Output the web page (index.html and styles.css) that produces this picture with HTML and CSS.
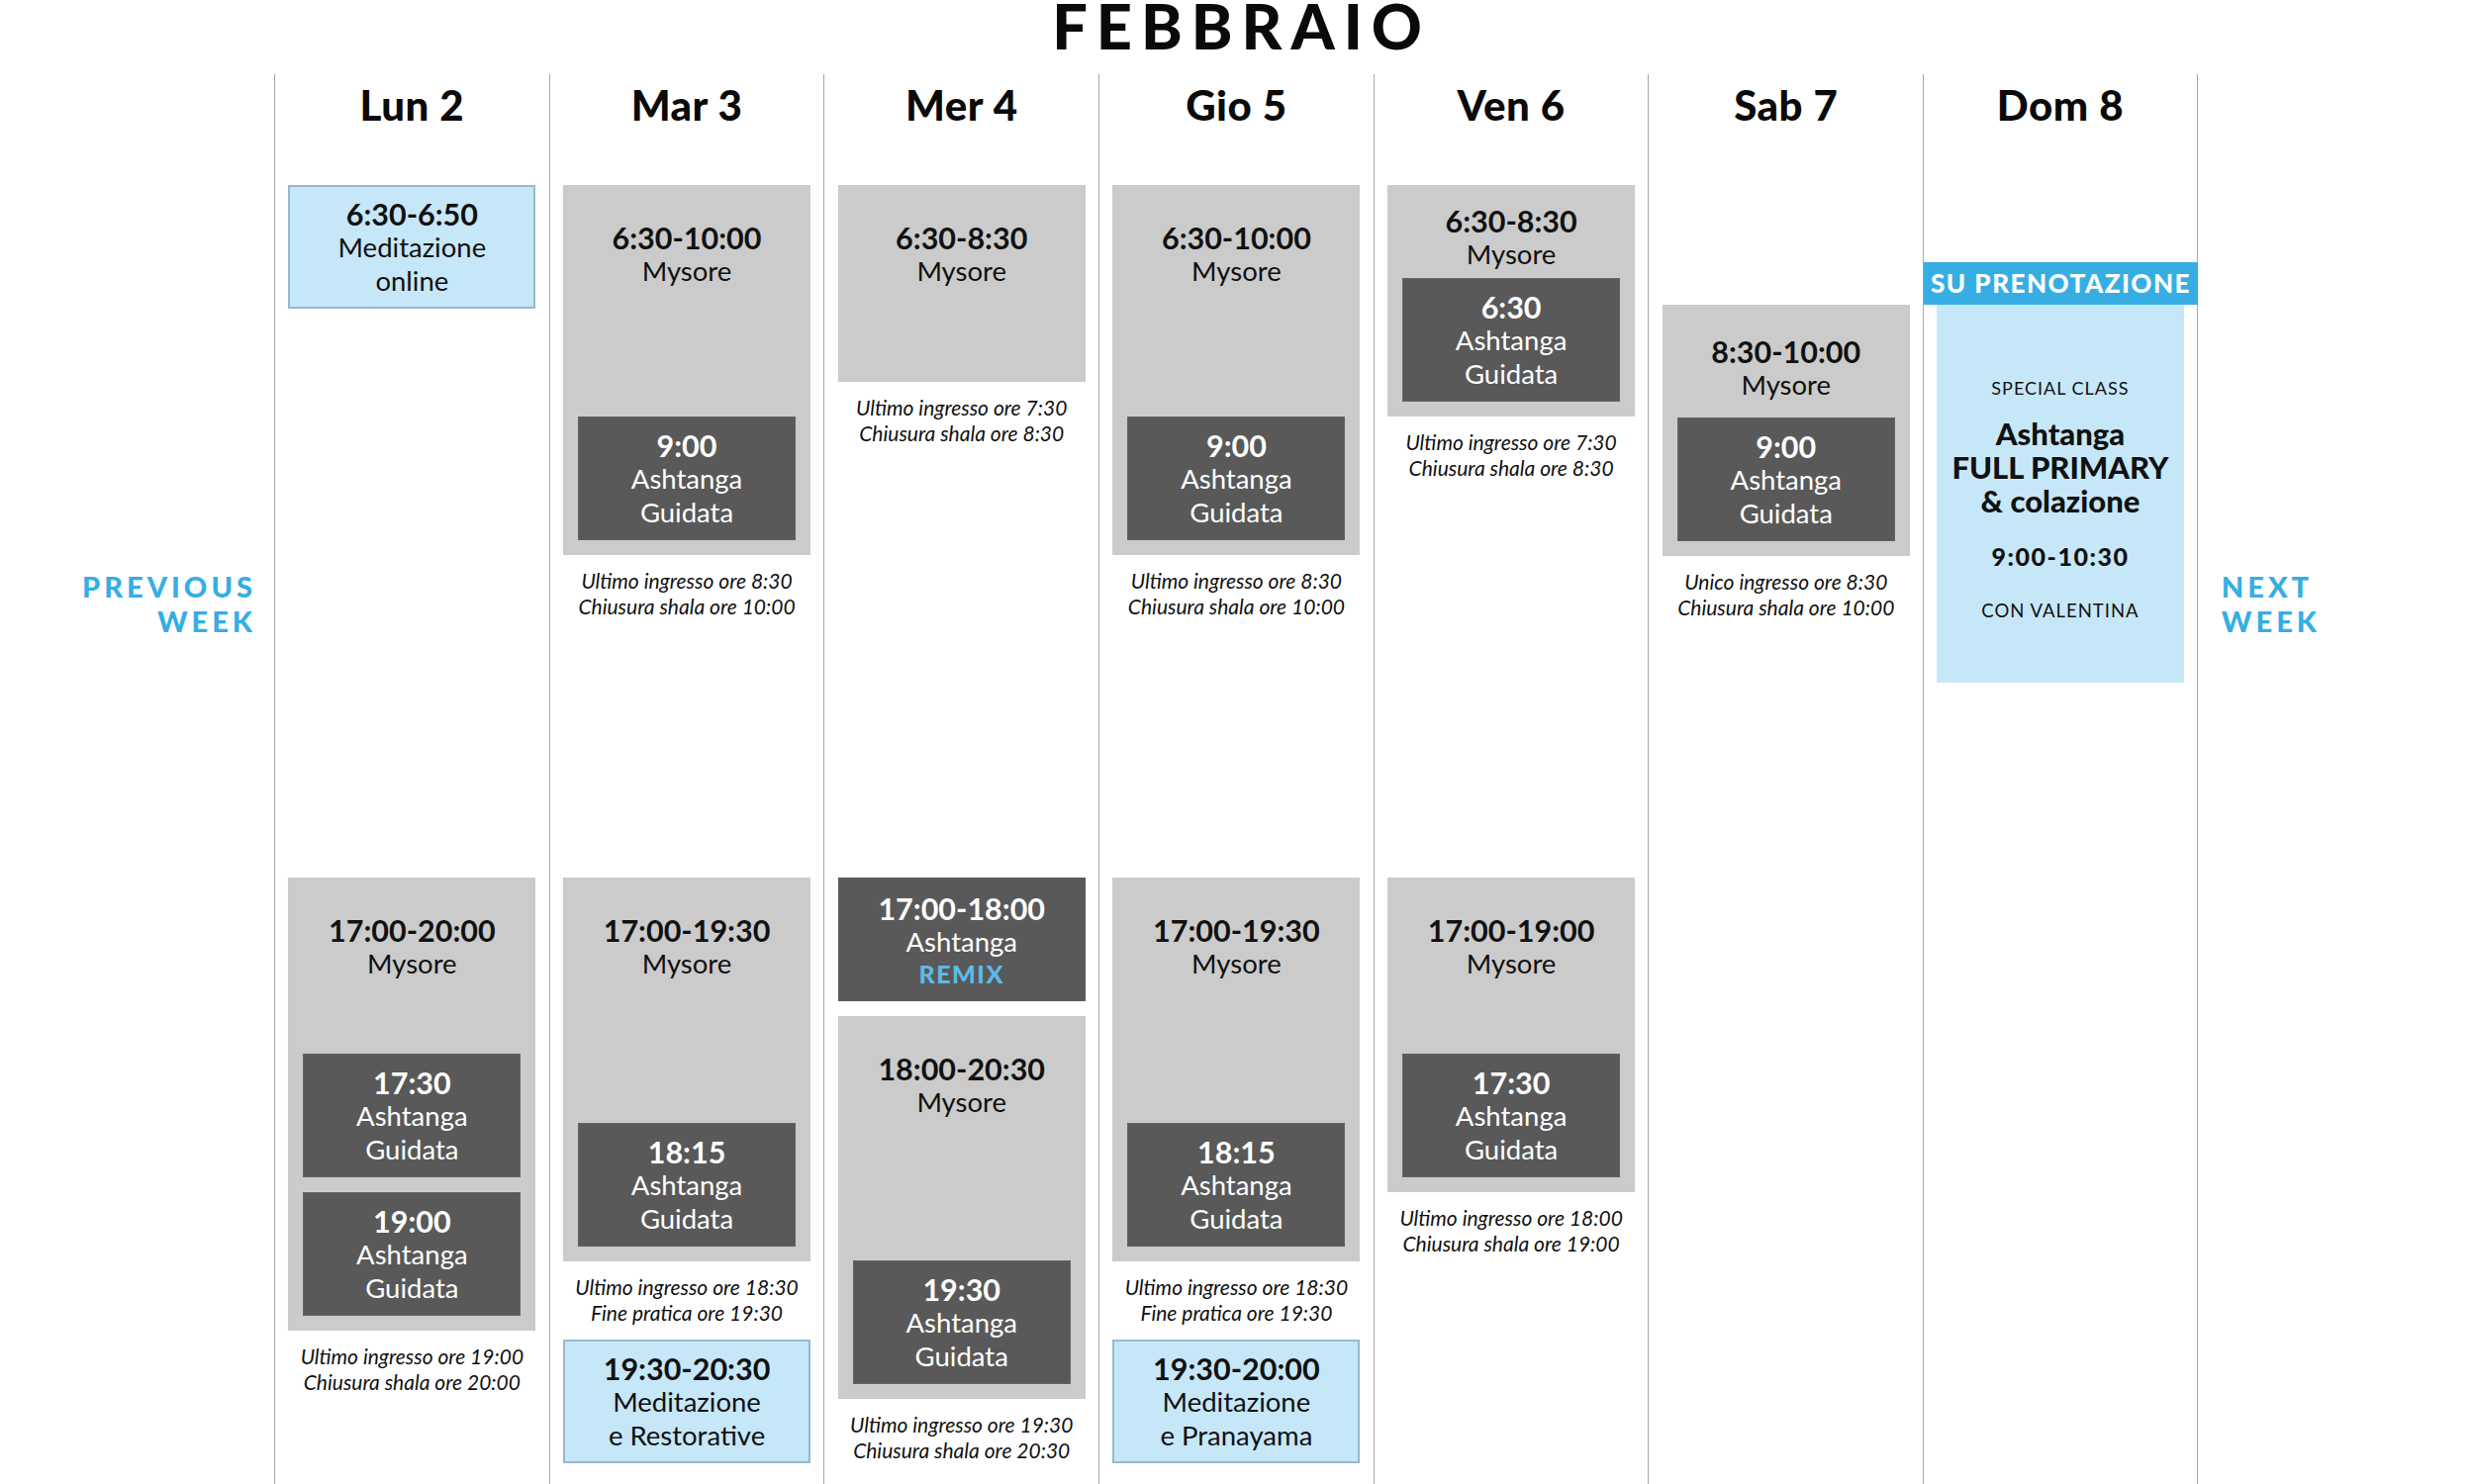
FILE: index.html
```html
<!DOCTYPE html>
<html lang="it">
<head>
<meta charset="utf-8">
<title>Febbraio</title>
<link rel="stylesheet" href="styles.css">
</head>
<body>
<header class="title-bar"><h1 class="title">FEBBRAIO</h1></header>
<div class="schedule">
  <div class="nav nav-prev"><span>PREVIOUS<br>WEEK</span></div>

  <!-- Lun 2 -->
  <div class="day">
    <div class="day-name">Lun 2</div>
    <div class="zone zone-am">
      <div class="cls cls-blue">
        <div class="time">6:30-6:50</div><div class="name">Meditazione</div><div class="name">online</div>
      </div>
    </div>
    <div class="zone zone-pm">
      <div class="cls cls-gray" style="height:458px">
        <div class="time">17:00-20:00</div><div class="name">Mysore</div>
        <div class="subs">
          <div class="sub"><div class="time">17:30</div><div class="name">Ashtanga</div><div class="name">Guidata</div></div>
          <div class="sub"><div class="time">19:00</div><div class="name">Ashtanga</div><div class="name">Guidata</div></div>
        </div>
      </div>
      <p class="note">Ultimo ingresso ore 19:00<br>Chiusura shala ore 20:00</p>
    </div>
  </div>

  <!-- Mar 3 -->
  <div class="day">
    <div class="day-name">Mar 3</div>
    <div class="zone zone-am">
      <div class="cls cls-gray" style="height:374px">
        <div class="time">6:30-10:00</div><div class="name">Mysore</div>
        <div class="subs">
          <div class="sub"><div class="time">9:00</div><div class="name">Ashtanga</div><div class="name">Guidata</div></div>
        </div>
      </div>
      <p class="note">Ultimo ingresso ore 8:30<br>Chiusura shala ore 10:00</p>
    </div>
    <div class="zone zone-pm">
      <div class="cls cls-gray" style="height:388px">
        <div class="time">17:00-19:30</div><div class="name">Mysore</div>
        <div class="subs">
          <div class="sub"><div class="time">18:15</div><div class="name">Ashtanga</div><div class="name">Guidata</div></div>
        </div>
      </div>
      <p class="note">Ultimo ingresso ore 18:30<br>Fine pratica ore 19:30</p>
      <div class="cls cls-blue">
        <div class="time">19:30-20:30</div><div class="name">Meditazione</div><div class="name">e Restorative</div>
      </div>
    </div>
  </div>

  <!-- Mer 4 -->
  <div class="day">
    <div class="day-name">Mer 4</div>
    <div class="zone zone-am">
      <div class="cls cls-gray" style="height:199px">
        <div class="time">6:30-8:30</div><div class="name">Mysore</div>
      </div>
      <p class="note">Ultimo ingresso ore 7:30<br>Chiusura shala ore 8:30</p>
    </div>
    <div class="zone zone-pm">
      <div class="cls cls-dark">
        <div class="time">17:00-18:00</div><div class="name">Ashtanga</div><div class="remix">REMIX</div>
      </div>
      <div class="cls cls-gray cls-after" style="height:387px">
        <div class="time">18:00-20:30</div><div class="name">Mysore</div>
        <div class="subs">
          <div class="sub"><div class="time">19:30</div><div class="name">Ashtanga</div><div class="name">Guidata</div></div>
        </div>
      </div>
      <p class="note">Ultimo ingresso ore 19:30<br>Chiusura shala ore 20:30</p>
    </div>
  </div>

  <!-- Gio 5 -->
  <div class="day">
    <div class="day-name">Gio 5</div>
    <div class="zone zone-am">
      <div class="cls cls-gray" style="height:374px">
        <div class="time">6:30-10:00</div><div class="name">Mysore</div>
        <div class="subs">
          <div class="sub"><div class="time">9:00</div><div class="name">Ashtanga</div><div class="name">Guidata</div></div>
        </div>
      </div>
      <p class="note">Ultimo ingresso ore 8:30<br>Chiusura shala ore 10:00</p>
    </div>
    <div class="zone zone-pm">
      <div class="cls cls-gray" style="height:388px">
        <div class="time">17:00-19:30</div><div class="name">Mysore</div>
        <div class="subs">
          <div class="sub"><div class="time">18:15</div><div class="name">Ashtanga</div><div class="name">Guidata</div></div>
        </div>
      </div>
      <p class="note">Ultimo ingresso ore 18:30<br>Fine pratica ore 19:30</p>
      <div class="cls cls-blue">
        <div class="time">19:30-20:00</div><div class="name">Meditazione</div><div class="name">e Pranayama</div>
      </div>
    </div>
  </div>

  <!-- Ven 6 -->
  <div class="day">
    <div class="day-name">Ven 6</div>
    <div class="zone zone-am">
      <div class="cls cls-gray cls-short" style="height:234px">
        <div class="time">6:30-8:30</div><div class="name">Mysore</div>
        <div class="subs">
          <div class="sub"><div class="time">6:30</div><div class="name">Ashtanga</div><div class="name">Guidata</div></div>
        </div>
      </div>
      <p class="note">Ultimo ingresso ore 7:30<br>Chiusura shala ore 8:30</p>
    </div>
    <div class="zone zone-pm">
      <div class="cls cls-gray" style="height:318px">
        <div class="time">17:00-19:00</div><div class="name">Mysore</div>
        <div class="subs">
          <div class="sub"><div class="time">17:30</div><div class="name">Ashtanga</div><div class="name">Guidata</div></div>
        </div>
      </div>
      <p class="note">Ultimo ingresso ore 18:00<br>Chiusura shala ore 19:00</p>
    </div>
  </div>

  <!-- Sab 7 -->
  <div class="day">
    <div class="day-name">Sab 7</div>
    <div class="zone zone-am">
      <div class="cls cls-gray cls-mid" style="height:254px; margin-top:121px">
        <div class="time">8:30-10:00</div><div class="name">Mysore</div>
        <div class="subs">
          <div class="sub"><div class="time">9:00</div><div class="name">Ashtanga</div><div class="name">Guidata</div></div>
        </div>
      </div>
      <p class="note">Unico ingresso ore 8:30<br>Chiusura shala ore 10:00</p>
    </div>
  </div>

  <!-- Dom 8 -->
  <div class="day day-last">
    <div class="day-name">Dom 8</div>
    <div class="zone zone-am">
      <div class="banner">SU PRENOTAZIONE</div>
      <div class="special">
        <div class="special-label">SPECIAL CLASS</div>
        <div class="special-title">Ashtanga<br>FULL PRIMARY<br>&amp; colazione</div>
        <div class="special-time">9:00-10:30</div>
        <div class="special-teacher">CON VALENTINA</div>
      </div>
    </div>
  </div>

  <div class="nav nav-next"><span>NEXT<br>WEEK</span></div>
</div>
</body>
</html>
```

FILE: styles.css
```css
* { box-sizing: border-box; }

html, body {
  margin: 0;
  padding: 0;
  background: #ffffff;
}

body {
  font-family: Lato, "Liberation Sans", sans-serif;
  color: #111111;
  overflow: hidden;
}

.title-bar {
  height: 75px;
  display: flex;
  justify-content: center;
  align-items: flex-start;
}

.title {
  margin: -11px 0 0;
  font-family: Lato, "Liberation Sans", sans-serif;
  font-weight: 900;
  font-size: 63px;
  line-height: 74px;
  letter-spacing: 9px;
  padding-left: 9px;
  text-align: center;
  color: #0a0a0a;
}

.schedule {
  display: grid;
  grid-template-columns: 277px repeat(7, 277.7px) 1fr;
  height: 1425px;
}

.nav {
  padding-top: 500px;
  font-weight: 900;
  font-size: 29px;
  line-height: 35px;
  letter-spacing: 4px;
  color: #36aee3;
}

.nav-prev {
  text-align: right;
  padding-right: 18px;
}

.nav-next {
  text-align: left;
  padding-left: 24px;
}

.day {
  border-left: 1px solid #a8a8a8;
  display: flex;
  flex-direction: column;
  min-width: 0;
}

.day-last {
  border-right: 1px solid #a8a8a8;
}

.day-name {
  flex: none;
  height: 112px;
  padding-top: 11px;
  font-weight: 900;
  font-size: 42px;
  line-height: 40px;
  letter-spacing: 0.5px;
  text-align: center;
  color: #0a0a0a;
}

.zone {
  display: flex;
  flex-direction: column;
}

.zone-am {
  flex: none;
  height: 700px;
}

.cls {
  flex: none;
  width: 250px;
  height: 125px;
  margin: 0 auto;
  display: flex;
  flex-direction: column;
  text-align: center;
}

.time {
  font-weight: 700;
  font-size: 30.5px;
  line-height: 34px;
}

.name {
  font-weight: 400;
  font-size: 27.5px;
  line-height: 34px;
}

.cls-gray {
  background: #cbcbcb;
  padding: 36px 15px 15px;
}

.cls-short {
  padding-top: 19px;
}

.cls-mid {
  padding-top: 30px;
}

.subs {
  margin-top: auto;
  display: flex;
  flex-direction: column;
  gap: 15px;
}

.sub {
  height: 125px;
  background: #595959;
  color: #ffffff;
  display: flex;
  flex-direction: column;
  justify-content: center;
  border: 1px solid #646464;
}

.cls-dark {
  background: #595959;
  color: #ffffff;
  justify-content: center;
}

.remix {
  font-weight: 900;
  font-size: 25px;
  line-height: 30px;
  letter-spacing: 1.5px;
  color: #5cbbe6;
}

.cls-after {
  margin-top: 15px;
}

.cls-blue {
  background: #c6e7f8;
  border: 2px solid #98b9cd;
  justify-content: center;
}

.note {
  margin: 13px 0 0;
  font-style: italic;
  font-size: 21px;
  line-height: 26px;
  text-align: center;
  color: #111111;
}

.note + .cls {
  margin-top: 14px;
}

.banner {
  margin-top: 78px;
  margin-right: -1px;
  height: 43px;
  background: #36aee3;
  color: #ffffff;
  font-weight: 900;
  font-size: 26px;
  line-height: 43px;
  letter-spacing: 1.5px;
  text-align: center;
  white-space: nowrap;
}

.special {
  width: 250px;
  height: 382px;
  margin: 0 auto;
  background: #c6e7f8;
  text-align: center;
  padding-top: 72px;
}

.special-label {
  font-size: 18px;
  line-height: 24px;
  letter-spacing: 1px;
}

.special-title {
  margin-top: 17px;
  font-weight: 900;
  font-size: 31px;
  line-height: 34px;
}

.special-time {
  margin-top: 24px;
  font-weight: 900;
  font-size: 25px;
  line-height: 30px;
  letter-spacing: 1.5px;
}

.special-teacher {
  margin-top: 28px;
  font-size: 18.5px;
  line-height: 24px;
  letter-spacing: 1px;
}
```
